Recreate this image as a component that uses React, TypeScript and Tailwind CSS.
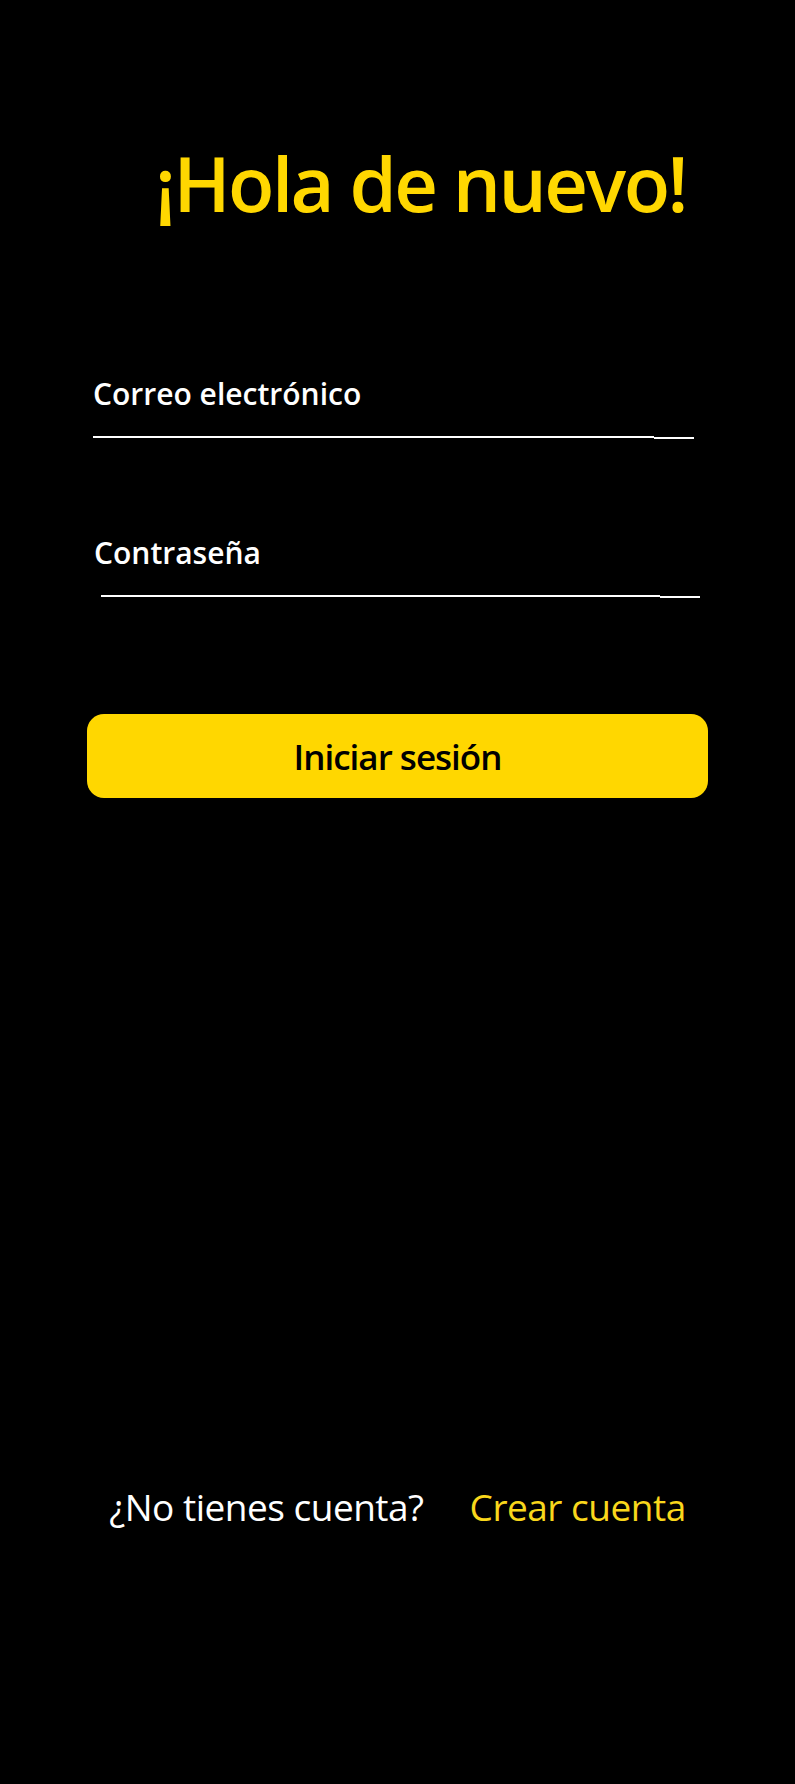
import React from "react";

const font = { fontFamily: "'Open Sans', Lato, sans-serif" };

function Field({ label, className }: { label: string; className: string }) {
  return (
    <div className={className}>
      <label className="block text-[30px] font-semibold leading-none text-white">{label}</label>
      <div className="mt-[27px] flex items-start">
        <div className="h-[2px] flex-1 bg-white" />
        <div className="mt-[1px] h-[2px] w-[40px] bg-white" />
      </div>
    </div>
  );
}

export default function App() {
  return (
    <div className="flex h-[1784px] w-full flex-col bg-black" style={font}>
      <div className="mt-[145px] flex justify-center pl-[46px]">
        <h1 className="text-[76px] font-semibold leading-none tracking-[-2.5px] text-[#FFD700]">
          ¡Hola de nuevo!
        </h1>
      </div>

      <Field label="Correo electrónico" className="ml-[93px] mr-[101px] mt-[158px]" />
      <Field label="Contraseña" className="ml-[94px] mr-[95px] mt-[99px] [&>div]:ml-[7px]" />

      <button className="mx-[87px] mt-[116px] flex h-[84px] items-center justify-center rounded-[17px] bg-[#FFD700] text-[35px] font-semibold leading-none tracking-[-1px] text-black">
        Iniciar sesión
      </button>

      <div className="mt-[690px] flex justify-center gap-[46px] text-[37px] font-medium leading-none tracking-[-0.5px]">
        <span className="text-white">¿No tienes cuenta?</span>
        <a href="#" className="text-[#F9D71C]">
          Crear cuenta
        </a>
      </div>
    </div>
  );
}
